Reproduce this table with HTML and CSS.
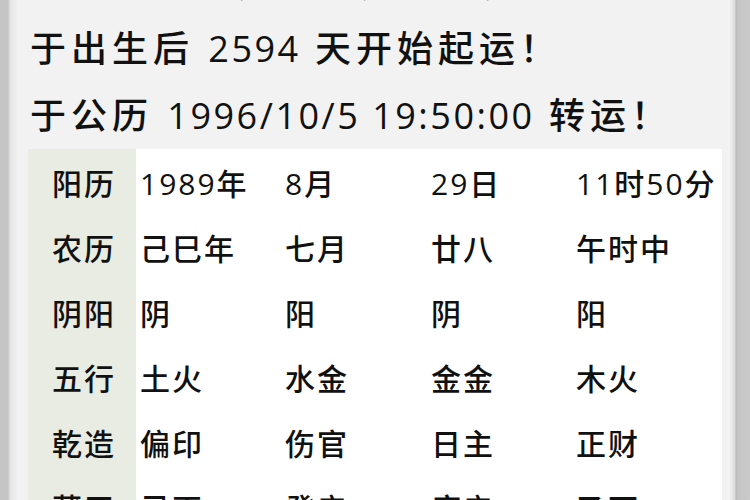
FILE: index.html
```html
<!DOCTYPE html>
<html lang="zh-CN">
<head>
<meta charset="utf-8">
<title>起运</title>
<link rel="stylesheet" href="styles.css">
</head>
<body>
<div class="screen">
  <div class="edge-left"></div>
  <main class="panel">
    <div class="info">
      <p class="line partial">八字：己巳，壬申，庚申，壬午（阳）</p>
      <p class="line">于出生后 <span class="num">2594</span> 天开始起运！</p>
      <p class="line">于公历 <span class="num">1996/10/5 19:50:00</span> 转运！</p>
    </div>
    <div class="table">
      <div class="row"><div class="label">阳历</div><div class="cell">1989年</div><div class="cell">8月</div><div class="cell">29日</div><div class="cell">11时50分</div></div>
      <div class="row"><div class="label">农历</div><div class="cell">己巳年</div><div class="cell">七月</div><div class="cell">廿八</div><div class="cell">午时中</div></div>
      <div class="row"><div class="label">阴阳</div><div class="cell">阴</div><div class="cell">阳</div><div class="cell">阴</div><div class="cell">阳</div></div>
      <div class="row"><div class="label">五行</div><div class="cell">土火</div><div class="cell">水金</div><div class="cell">金金</div><div class="cell">木火</div></div>
      <div class="row"><div class="label">乾造</div><div class="cell">偏印</div><div class="cell">伤官</div><div class="cell">日主</div><div class="cell">正财</div></div>
      <div class="row"><div class="label">藏干</div><div class="cell">己丙</div><div class="cell">癸辛</div><div class="cell">庚辛</div><div class="cell">乙丁</div></div>
    </div>
  </main>
  <div class="edge-right"></div>
</div>
</body>
</html>
```

FILE: styles.css
```css
html, body {
  margin: 0;
  padding: 0;
  width: 750px;
  height: 500px;
  overflow: hidden;
  background: #f2f2f2;
}

.screen {
  display: flex;
  width: 750px;
  height: 500px;
  overflow: hidden;
  font-family: "Open Sans", "Noto Sans CJK SC", sans-serif;
  font-weight: 500;
  color: #111111;
}

.edge-left {
  width: 17px;
  flex: none;
  background: linear-gradient(to right, #c5c5c5 0, #c5c5c5 8px, #d6d6d6 9px, #e8e8e8 11px, #ececec 16px, #f1f1f1 17px);
}

.edge-right {
  width: 20px;
  flex: none;
  background: linear-gradient(to right, #f0f0f0 0, #e4e4e4 3px, #dadada 5px, #b9b9b9 6px, #c6c6c6 8px, #cacaca 20px);
}

.panel {
  flex: 1;
  min-width: 0;
  display: flex;
  flex-direction: column;
}

.info {
  margin-top: -30px;
  padding-left: 13px;
}

.line {
  margin: 0;
  height: 67px;
  line-height: 67px;
  font-size: 36px;
  white-space: nowrap;
  letter-spacing: 5px;
  overflow: hidden;
}

.line.partial {
  height: 45px;
  line-height: 25px;
}

.num {
  letter-spacing: 2.5px;
}

.table {
  margin-left: 11px;
  width: 694px;
  display: flex;
  flex-direction: column;
  background: #ffffff;
}

.row {
  display: grid;
  grid-template-columns: 108px 145px 146px 145px 1fr;
  height: 65px;
  align-items: center;
  font-size: 30px;
  letter-spacing: 2px;
}

.label {
  height: 100%;
  display: flex;
  align-items: center;
  padding-left: 24px;
  background: #e9ece3;
}

.cell {
  padding-left: 4px;
  white-space: nowrap;
}
```
